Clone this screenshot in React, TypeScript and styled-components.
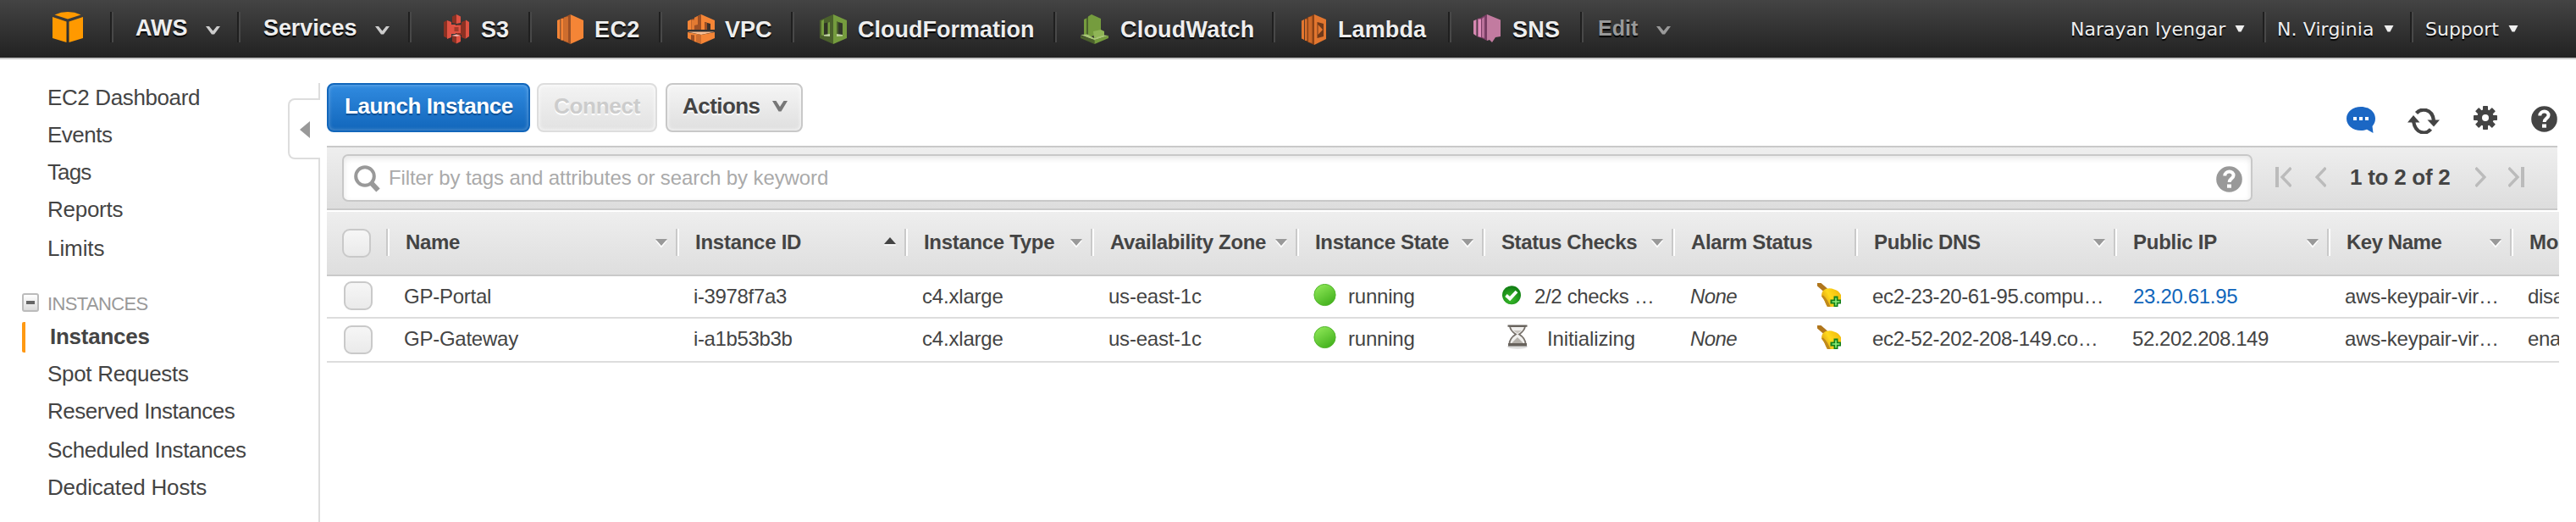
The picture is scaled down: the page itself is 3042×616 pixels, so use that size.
import React from 'react';
import styled, { createGlobalStyle, css } from 'styled-components';

const GlobalStyle = createGlobalStyle`
  * { box-sizing: border-box; }
  body {
    margin: 0;
    background: #fff;
    color: #444;
    font-family: "Liberation Sans", Helvetica, Arial, sans-serif;
  }
  svg { display: block; flex: none; }
`;

/* ---------- page frame ---------- */

const Page = styled.div`
  display: flex;
  flex-direction: column;
  height: 616px;
  overflow: hidden;
`;

const Body = styled.div`
  display: flex;
  flex: 1;
  min-height: 0;
`;

const Text = styled.span<{ $track?: number; $shift?: number }>`
  white-space: nowrap;
  letter-spacing: ${(p) => p.$track ?? 0}px;
  margin-left: ${(p) => p.$shift ?? 0}px;
`;

/* ---------- top navigation ---------- */

const NavBar = styled.header`
  display: flex;
  flex: none;
  height: 70px;
  background: linear-gradient(#444 0, #222 68px);
  background-clip: padding-box;
  border-bottom: 2px solid #c6c6c6;
`;

const LogoLink = styled.a`
  width: 130px;
  padding: 14px 0 0 62px;
`;

const separator = css`
  background-image: linear-gradient(90deg, #1f1f1f 2px, #484848 2px);
  background-size: 4px 36px;
  background-position: 0 14px;
  background-repeat: no-repeat;
`;

const NavMenu = styled.a<{ $width: number; $indent: number; $muted?: boolean }>`
  ${separator}
  display: flex;
  justify-content: space-between;
  width: ${(p) => p.$width}px;
  padding-left: ${(p) => p.$indent}px;
  font-size: ${(p) => (p.$muted ? 25 : 27)}px;
  font-weight: bold;
  line-height: 66px;
  color: ${(p) => (p.$muted ? '#999' : '#eee')};
  text-shadow: 0 2px 1px #000;
`;

const MenuChevron = styled.svg<{ $right: number }>`
  margin: 31px ${(p) => p.$right}px 0 0;
`;

const ServiceLink = styled.a<{ $width: number; $indent: number }>`
  ${separator}
  display: flex;
  width: ${(p) => p.$width}px;
  padding-left: ${(p) => p.$indent}px;
  font-size: 27px;
  font-weight: bold;
  line-height: 70px;
  color: #eee;
  text-shadow: 0 2px 1px #000;
`;

const ServiceIcon = styled.span<{ $gap: number }>`
  padding-top: 17px;
  margin-right: ${(p) => p.$gap}px;
`;

const NavSpacer = styled.div`
  flex: 1;
`;

const AccountMenu = styled.a<{ $width: number; $indent: number; $first?: boolean }>`
  ${(p) => !p.$first && separator}
  display: flex;
  width: ${(p) => p.$width}px;
  padding-left: ${(p) => p.$indent}px;
  font-family: "DejaVu Sans", Verdana, sans-serif;
  font-size: 22px;
  line-height: 69px;
  color: #eee;
  text-shadow: 0 2px 1px #000;
`;

const AccountCaret = styled.svg`
  margin: 30px 0 0 11px;
`;

/* ---------- sidebar ---------- */

const Sidebar = styled.nav`
  width: 340px;
  flex: none;
  padding-top: 23px;
`;

const SideLink = styled.a<{ $active?: boolean; $extra?: boolean }>`
  display: flex;
  align-items: center;
  height: 44px;
  margin-top: ${(p) => (p.$extra ? 2 : 0)}px;
  padding-left: ${(p) => (p.$active ? 26 : 56)}px;
  font-size: 26px;
  line-height: 44px;
  font-weight: ${(p) => (p.$active ? 'bold' : 'normal')};
`;

const ActiveMark = styled.i`
  width: 4px;
  height: 36px;
  margin: 2px 29px 0 0;
  background: #ff9913;
  border-radius: 2px 0 0 2px;
`;

const SideGroup = styled.div`
  display: flex;
  height: 34px;
  margin-top: 26px;
  padding-left: 26px;
  font-size: 22px;
  line-height: 35px;
  color: #999;
`;

const CollapseBox = styled.span`
  display: flex;
  align-items: center;
  justify-content: center;
  width: 20px;
  height: 22px;
  margin: 5px 10px 0 0;
  border: 2px solid #bbb;
  border-radius: 3px;
  background: linear-gradient(#fff, #dcdcdc);
  &::after {
    content: '';
    width: 10px;
    height: 4px;
    background: #666;
  }
`;

const Divider = styled.div`
  display: flex;
  flex-direction: column;
  align-items: flex-end;
  width: 38px;
  flex: none;
  padding-top: 28px;
`;

const DividerLine = styled.div<{ $height?: number }>`
  width: 2px;
  background: #ddd;
  ${(p) => (p.$height ? `height: ${p.$height}px;` : 'flex: 1;')}
`;

const CollapseTab = styled.button`
  display: flex;
  align-items: center;
  width: 38px;
  height: 72px;
  padding: 2px 0 0 12px;
  background: #fff;
  border: 2px solid #ddd;
  border-right: 0;
  border-radius: 8px 0 0 8px;
`;

/* ---------- main panel ---------- */

const Main = styled.main`
  width: 2636px;
  margin-left: 8px;
  padding-top: 28px;
`;

const ActionRow = styled.div`
  display: flex;
  width: 2634px;
  height: 74px;
`;

const buttonLooks = {
  primary: css`
    color: #fff;
    border-color: #1166bb;
    background: linear-gradient(#318be0, #1166bb);
    box-shadow: inset 0 0 5px rgba(255, 255, 255, 0.35);
    text-shadow: 0 2px 1px #0d4f94;
  `,
  disabled: css`
    color: #ccc;
    border-color: #ddd;
    background: linear-gradient(#f3f3f3, #e2e2e2);
    box-shadow: inset 0 0 5px #fff;
    text-shadow: 0 2px 0 #fff;
  `,
  normal: css`
    color: #444;
    border-color: #c8c8c8;
    background: linear-gradient(#f5f5f5, #dfdfdf);
    box-shadow: inset 0 0 5px #fff;
    text-shadow: 0 2px 0 #fff;
  `,
};

const Button = styled.button<{ $look: keyof typeof buttonLooks; $width: number; $gap?: number }>`
  display: flex;
  width: ${(p) => p.$width}px;
  height: 58px;
  margin-right: ${(p) => p.$gap ?? 0}px;
  padding: 0 0 0 18px;
  border: 2px solid;
  border-radius: 8px;
  font: bold 26px/50px "Liberation Sans", Helvetica, Arial, sans-serif;
  ${(p) => buttonLooks[p.$look]}
`;

const ToolIcons = styled.div`
  display: flex;
  align-items: flex-start;
  margin-left: auto;
  padding-top: 27px;
`;

const ToolIcon = styled.span<{ $gap?: number; $drop?: number }>`
  margin-right: ${(p) => p.$gap ?? 0}px;
  padding-top: ${(p) => p.$drop ?? 0}px;
`;

const FilterBar = styled.div`
  display: flex;
  width: 2634px;
  height: 76px;
  padding: 8px 0 0 18px;
  margin-bottom: 2px;
  border-top: 2px solid #c9c9c9;
  border-bottom: 2px solid #c9c9c9;
  background: linear-gradient(#eee, #ddd);
`;

const SearchBox = styled.div`
  display: flex;
  width: 2256px;
  height: 56px;
  padding: 0 10px 0 12px;
  border: 2px solid #c8c8c8;
  border-radius: 7px;
  background: #fff;
  box-shadow: inset 0 3px 7px rgba(0, 0, 0, 0.1);
  font-size: 24px;
  line-height: 51px;
  color: #aaa;
`;

const SearchGlyph = styled.span`
  margin: 11px 8px 0 0;
`;

const HelpSlot = styled.span`
  margin: 12px 0 0 auto;
`;

const Pager = styled.div`
  display: flex;
  padding-left: 27px;
  font-size: 26px;
  font-weight: bold;
  line-height: 54px;
`;

const PagerButton = styled.span<{ $gap: number }>`
  margin: 15px ${(p) => p.$gap}px 0 0;
`;

const PagerCount = styled.span`
  width: 148px;
`;

/* ---------- table ---------- */

const columns = '70px 342px 270px 220px 242px 220px 224px 216px 306px 252px 216px 58px';

const HeadRow = styled.div`
  display: grid;
  grid-template-columns: ${columns};
  height: 76px;
  border-bottom: 2px solid #c9c9c9;
  background: linear-gradient(#eee, #dedede);
`;

const HeadCell = styled.div`
  display: flex;
  min-width: 0;
  overflow: hidden;
  padding-left: 23px;
  font-size: 24px;
  font-weight: bold;
  line-height: 71px;
  background: linear-gradient(90deg, #c9c9c9 2px, #fff 2px) 0 20px / 4px 32px no-repeat;
`;

const SortMark = styled.svg<{ $up?: boolean }>`
  margin: ${(p) => (p.$up ? 30 : 32)}px 10px 0 auto;
`;

const DataRow = styled.div<{ $height: number }>`
  display: grid;
  grid-template-columns: ${columns};
  height: ${(p) => p.$height}px;
  border-bottom: 2px solid #ddd;
`;

const Cell = styled.div<{ $italic?: boolean }>`
  display: flex;
  min-width: 0;
  overflow: hidden;
  padding-left: 21px;
  font-size: 24px;
  line-height: 47px;
  font-style: ${(p) => (p.$italic ? 'italic' : 'normal')};
`;

const CellIcon = styled.span<{ $top: number; $left: number; $right: number }>`
  margin: ${(p) => `${p.$top}px ${p.$right}px 0 ${p.$left}px`};
`;

const BellSlot = styled.span`
  margin: 8px 16px 0 auto;
`;

const IpLink = styled.a`
  color: #1166bb;
  margin-left: 2px;
`;

const CheckBox = styled.span<{ $top: number; $left: number }>`
  width: 34px;
  height: 34px;
  margin: ${(p) => p.$top}px 0 0 ${(p) => p.$left}px;
  border: 2px solid #c9c9c9;
  border-radius: 9px;
  background: linear-gradient(#f6f6f6, #eaeaea);
`;

/* ---------- drawings ---------- */

const Logo = () => (
  <svg width="36" height="36" viewBox="0 0 36 36" fill="#ff9900">
    <path d="M18 0 26 .8 33.5 3.6 18 8.6 2.5 3.6 10 .8Z" />
    <path d="M0 6 16.5 11.5V36L0 31Z" />
    <path d="M36 6 19.5 11.5V36L36 31Z" />
  </svg>
);

const ChevronShape = ({ color, right }: { color: string; right: number }) => (
  <MenuChevron $right={right} width="17" height="10" viewBox="0 0 17 10">
    <path d="M0 0H4L8.500 5.500 13 0H17L10 9.500H7Z" fill={color} />
  </MenuChevron>
);

const Caret = () => (
  <AccountCaret width="12" height="8" viewBox="0 0 12 8">
    <path d="M.5 0H11.5L7.5 7.5H4.5Z" fill="#eee" />
  </AccountCaret>
);

const S3Icon = () => (
  <svg width="30" height="35" viewBox="0 0 30 35">
    <path d="M0 9 4 7V28L0 26Z" fill="#8c3123" />
    <path d="M4 7 9 9V12H14V23H9V27L4 29Z" fill="#e05243" />
    <path d="M26 7 21 9V12H15V24H21V27L26 29Z" fill="#8c3123" />
    <path d="M26 6.5 30 9V26L26 28.5Z" fill="#e05243" />
    <path d="M15 0 10 2.5V10L15 11Z" fill="#8c3123" />
    <path d="M15 0 20 2.5V10L15 11Z" fill="#e05243" />
    <path d="M10 13H20V22H10Z" fill="#e05243" />
    <path d="M12.5 15H17.5V20H12.5Z" fill="#a13a2b" />
    <path d="M10 25 15 24V34.5L10 32Z" fill="#8c3123" />
    <path d="M20 25 15 24V34.5L20 32Z" fill="#e05243" />
    <path d="M9 25 15 23.5 20 25 15 26Z" fill="#f2b0a9" />
  </svg>
);

const Ec2Icon = () => (
  <svg width="31" height="35" viewBox="0 0 31 35">
    <path d="M15.5 0 31 7V28L15.5 35Z" fill="#f58536" />
    <path d="M15.5 0 8 3.5V31.5L15.5 35Z" fill="#9d5025" />
    <path d="M8 3.5 13 2.5V33L8 31.5Z" fill="#f58536" opacity=".55" />
    <path d="M4 5 8 3.5V31.5L4 30Z" fill="#9d5025" />
    <path d="M4.5 5H7.5V30.5H4.5Z" fill="#f58536" />
    <path d="M0 7 3.5 5.5V29.5L0 28Z" fill="#f58536" />
  </svg>
);

const VpcIcon = () => (
  <svg width="32" height="35" viewBox="0 0 32 35">
    <path d="M0 8 4 6V18H0ZM8 4 16 0 32 7V18H8Z" fill="#f58536" />
    <path d="M4 6 8 4.5V18H4ZM8 4 16 0V18H8Z" fill="#9d5025" />
    <path d="M4.5 6.5H8V18H4.5ZM8 4 12 2V12L8 13Z" fill="#f58536" opacity=".8" />
    <path d="M20 9 27 11V18H20Z" fill="#3a302a" />
    <path d="M20 9 23 10V18H20Z" fill="#9d5025" />
    <path d="M0 20.5H32L16 24Z" fill="#fbbf93" />
    <path d="M0 21 16 24V35L8 32V29L4 30 0 28Z" fill="#f58536" />
    <path d="M4 24 8 24.5V32L4 30Z" fill="#9d5025" />
    <path d="M32 21 16 24V35L32 28Z" fill="#f58536" />
    <path d="M16 24V35L10 32.5V24Z" fill="#9d5025" opacity=".45" />
  </svg>
);

const CloudFormationIcon = () => (
  <svg width="32" height="35" viewBox="0 0 32 35">
    <path d="M16 0 0 7V28L16 35Z" fill="#4b612c" />
    <path d="M16 0 32 7V28L16 35Z" fill="#759c3e" />
    <path d="M2 7.5 5 6V25L2 24.5Z" fill="#759c3e" />
    <path d="M5 10.5 12 9V25H5Z" fill="#2f3325" />
    <path d="M9.500 9.500 12 9V25H9.500Z" fill="#759c3e" />
    <path d="M20 8.5 27 10.5V25H20Z" fill="#32372a" />
    <path d="M20 8.5 22 9V24H20Z" fill="#4b612c" />
    <path d="M5 24 12 23V26L5 25.5ZM20 23 27 24V25.5L20 26Z" fill="#c3d6a4" />
  </svg>
);

const CloudWatchIcon = () => (
  <svg width="33" height="35" viewBox="0 0 33 35">
    <path d="M4 6 7 4.5V24H4Z" fill="#759c3e" />
    <path d="M7 4.5 13 0V26L7 24Z" fill="#4b612c" />
    <path d="M9 2.5 13 0 24 5V22L13 26 9 25Z" fill="#759c3e" />
    <path d="M15 20 24 18 28 20V26L16 28Z" fill="#8fb556" />
    <path d="M0 24 8 23.500 16 28 28 24.500 33 25 16.5 30.500Z" fill="#a9c777" />
    <path d="M0 25 16.5 30V35L0 28Z" fill="#4b612c" />
    <path d="M33 25 16.5 30V35L33 28Z" fill="#759c3e" />
  </svg>
);

const LambdaIcon = () => (
  <svg width="29" height="36" viewBox="0 0 29 36">
    <path d="M15 0 29 6V29L15 36Z" fill="#e2762f" />
    <path d="M15 0 7 3.5V32.5L15 36Z" fill="#8a4216" />
    <path d="M8 3.5 12.5 2V34L8 32.5Z" fill="#e2762f" opacity=".75" />
    <path d="M3.5 5.5 7 4V32L3.5 30.5Z" fill="#8a4216" />
    <path d="M4 5.5H6.5V31H4Z" fill="#e2762f" opacity=".9" />
    <path d="M0 7.5 3 6V30L0 28.5Z" fill="#e2762f" />
    <path d="M18.5 9 26 11V26L18.5 28Z" fill="#70391a" />
    <path d="M19.5 12 25 18 19.5 24Z" fill="#e2762f" />
  </svg>
);

const SnsIcon = () => (
  <svg width="32" height="33" viewBox="0 0 32 33">
    <path d="M16 0 32 6.5V26L26 27 22 33 19 30 16 31Z" fill="#c27ba0" />
    <path d="M16 0 10 3V28L16 31Z" fill="#7a3e65" />
    <path d="M10 5 13 3V28L10 27Z" fill="#d587b0" opacity=".7" />
    <path d="M4.5 5 10 3.5V28L4.5 26.5Z" fill="#7a3e65" />
    <path d="M5.5 5.5H9V27L5.5 26Z" fill="#e08dbb" />
    <path d="M0 7.5 3.5 6V25.5L0 23Z" fill="#d587b0" />
  </svg>
);

const TabArrow = () => (
  <svg width="12" height="20" viewBox="0 0 12 20">
    <path d="M12 0V20L0 10Z" fill="#999" />
  </svg>
);

const ActionChevron = styled.svg`
  margin: 19px 0 0 14px;
`;

const ChatIcon = () => (
  <svg width="34" height="31" viewBox="0 0 34 31">
    <path d="M17 0C26.5 0 34 6 34 14c0 4-1.500 6.500-3.500 9L31.500 31 24 26.700C22 27.500 19.500 28 17 28 7.500 28 0 22 0 14S7.500 0 17 0Z" fill="#1b67c4" />
    <path d="M8 12h4v4H8zM15 12h4v4h-4zM22 12h4v4h-4z" fill="#fff" />
  </svg>
);

const RefreshIcon = () => (
  <svg width="38" height="30" viewBox="0 0 38 30">
    <path d="M10.5 5.500C16-.5 29-.5 31 14" fill="none" stroke="#444" strokeWidth="4.200" />
    <path d="M27.500 24.500C22 31 9.500 30.500 7 15" fill="none" stroke="#444" strokeWidth="4.200" />
    <path d="M23.500 13.500H38L31 21.500Z" fill="#444" />
    <path d="M0 16.500H14.500L7 8Z" fill="#444" />
  </svg>
);

const GearIcon = () => (
  <svg width="28" height="28" viewBox="0 0 28 28">
    <g fill="#444">
      <circle cx="14" cy="14" r="10" />
      {[0, 45, 90, 135].map((angle) => (
        <rect key={angle} x="11" y="0" width="6" height="28" rx=".8" transform={`rotate(${angle} 14 14)`} />
      ))}
    </g>
    <circle cx="14" cy="14" r="4" fill="#fff" />
  </svg>
);

const HelpIcon = ({ color }: { color: string }) => (
  <svg width="31" height="31" viewBox="0 0 31 31">
    <circle cx="15.5" cy="15.5" r="15.3" fill={color} />
    <path d="M10.3 11.5C10.5 4.8 21 5 20.5 11.3 20.2 14.8 15.8 14.6 15.6 19" fill="none" stroke="#fff" strokeWidth="4" />
    <rect x="13" y="21.5" width="5" height="4.2" fill="#fff" />
  </svg>
);

const Magnifier = () => (
  <svg width="31" height="32" viewBox="0 0 31 32">
    <circle cx="13" cy="13" r="10.8" fill="none" stroke="#999" strokeWidth="4" />
    <path d="M20 20.5 28.5 29.5" stroke="#999" strokeWidth="6" />
  </svg>
);

const PageStep = ({ flip, edge }: { flip?: boolean; edge?: boolean }) => {
  const width = edge ? 19 : 13;
  return (
    <svg width={width} height="24" viewBox={`0 0 ${width} 24`}>
      <g transform={flip ? `translate(${width} 0) scale(-1 1)` : undefined} fill="none" stroke="#bbb">
        {edge && <path d="M2 0V24" strokeWidth="4" />}
        <path d={`M${width - 0.5} 1 ${width - 11} 12 ${width - 0.5} 23`} strokeWidth="3.4" />
      </g>
    </svg>
  );
};

const Sort = ({ up }: { up?: boolean }) => (
  <SortMark $up={up} width="14" height="11" viewBox="0 0 14 11">
    {up ? (
      <>
        <path d="M0 8.5H14V10H0Z" fill="#fff" opacity=".7" />
        <path d="M7 0 14 8H0Z" fill="#444" />
      </>
    ) : (
      <>
        <path d="M0 2H14L7 10.5Z" fill="#fff" />
        <path d="M0 0H14L7 8Z" fill="#999" />
      </>
    )}
  </SortMark>
);

const RunningDot = () => (
  <svg width="27" height="27" viewBox="0 0 27 27">
    <defs>
      <linearGradient id="dot" x1=".2" y1="0" x2=".8" y2="1">
        <stop offset="0" stopColor="#8fe858" />
        <stop offset="1" stopColor="#3fae1a" />
      </linearGradient>
    </defs>
    <circle cx="13.5" cy="13" r="12.6" fill="url(#dot)" stroke="#52b52c" strokeWidth="1" />
  </svg>
);

const CheckIcon = () => (
  <svg width="24" height="24" viewBox="0 0 24 24">
    <defs>
      <radialGradient id="ok" cx=".45" cy=".7" r=".7">
        <stop offset="0" stopColor="#3cc02c" />
        <stop offset="1" stopColor="#0e7a12" />
      </radialGradient>
    </defs>
    <circle cx="12" cy="11.2" r="11" fill="url(#ok)" />
    <path d="M5.5 11.5 10 15.5 18 7" fill="none" stroke="#fff" strokeWidth="3.8" />
  </svg>
);

const Hourglass = () => (
  <svg width="24" height="29" viewBox="0 0 24 29">
    <ellipse cx="12" cy="26" rx="12" ry="2.8" fill="#ddd" />
    <path d="M3 2H21C20.500 7 17 9.500 14 11.500 18 14 21.500 17 21.500 23H2.500C2.500 17 6 14 10 11.500 7 9.500 3.500 7 3 2Z" fill="#f0efed" stroke="#76706a" strokeWidth="1.8" />
    <path d="M7 7H17L12 10.500Z" fill="#c9c5c0" />
    <path d="M5 22 12 15 19 22Z" fill="#b5b1ab" />
    <path d="M.5 .5H23.500V2.800H.5ZM1 22H23V25.500H1Z" fill="#67625c" />
  </svg>
);

const BellIcon = () => (
  <svg width="28" height="28" viewBox="0 0 28 28">
    <defs>
      <linearGradient id="bell" x1="0" y1=".7" x2="1" y2=".2">
        <stop offset="0" stopColor="#d99a12" />
        <stop offset=".45" stopColor="#ffd91c" />
        <stop offset="1" stopColor="#f0b90a" />
      </linearGradient>
    </defs>
    <path d="M0 0H4.500L12 6.500 8 10.500 0 3.500Z" fill="#b0761c" />
    <path d="M7 9C11 5.500 16 6 20 7.500 24 8.500 26 10.500 28 14V20L20 28H12C10 25 9.500 21 5 15.500 5 13 5.500 10.500 7 9Z" fill="url(#bell)" />
    <path d="M12 28C10 25 9.500 21 5 15.500L7 14.500C11 18 13 22 15.500 28Z" fill="#c08a1c" />
    <path d="M19.500 15.500H24.500V19.500H28V24.500H24.500V28H19.500V24.500H15.500V19.500H19.500Z" fill="#14801a" />
    <path d="M21.200 17.500H22.800V21.200H26.500V22.800H22.800V26.500H21.200V22.800H17.500V21.200H21.200Z" fill="#8ff07a" />
  </svg>
);

/* ---------- data ---------- */

const services = [
  { name: 'S3', icon: <S3Icon />, width: 142, indent: 42, gap: 14, track: 0 },
  { name: 'EC2', icon: <Ec2Icon />, width: 154, indent: 34, gap: 13, track: 0.4 },
  { name: 'VPC', icon: <VpcIcon />, width: 156, indent: 34, gap: 12, track: 0 },
  { name: 'CloudFormation', icon: <CloudFormationIcon />, width: 310, indent: 34, gap: 13, track: 0 },
  { name: 'CloudWatch', icon: <CloudWatchIcon />, width: 258, indent: 32, gap: 14, track: 0.2 },
  { name: 'Lambda', icon: <LambdaIcon />, width: 208, indent: 35, gap: 14, track: 0.1 },
  { name: 'SNS', icon: <SnsIcon />, width: 156, indent: 30, gap: 14, track: 0.3 },
];

const sideTop = [
  { name: 'EC2 Dashboard', track: -0.38 },
  { name: 'Events', track: -0.5 },
  { name: 'Tags', track: -0.9 },
  { name: 'Reports', track: -0.26 },
  { name: 'Limits', track: -0.08, extra: true },
];

const sideInstances = [
  { name: 'Spot Requests', track: -0.3 },
  { name: 'Reserved Instances', track: -0.48 },
  { name: 'Scheduled Instances', track: -0.35, extra: true },
  { name: 'Dedicated Hosts', track: -0.18 },
];

const headings: { name: string; sort?: 'up' | 'down'; track: number; shift?: number }[] = [
  { name: 'Name', sort: 'down', track: -0.34 },
  { name: 'Instance ID', sort: 'up', track: -0.26 },
  { name: 'Instance Type', sort: 'down', track: -0.31 },
  { name: 'Availability Zone', sort: 'down', track: -0.34 },
  { name: 'Instance State', sort: 'down', track: -0.34 },
  { name: 'Status Checks', sort: 'down', track: -0.4 },
  { name: 'Alarm Status', track: -0.4 },
  { name: 'Public DNS', sort: 'down', track: -0.37 },
  { name: 'Public IP', sort: 'down', track: -0.27 },
  { name: 'Key Name', sort: 'down', track: -0.46 },
  { name: 'Mo', track: -0.3 },
];

const instances = [
  {
    name: 'GP-Portal',
    id: 'i-3978f7a3',
    ready: true,
    checks: '2/2 checks …',
    dns: 'ec2-23-20-61-95.compu…',
    ip: '23.20.61.95',
    monitoring: 'disa',
    height: 50,
    boxTop: 6,
  },
  {
    name: 'GP-Gateway',
    id: 'i-a1b53b3b',
    ready: false,
    checks: 'Initializing',
    dns: 'ec2-52-202-208-149.co…',
    ip: '52.202.208.149',
    monitoring: 'ena',
    height: 52,
    boxTop: 8,
  },
];

/* ---------- screen ---------- */

export default function App() {
  return (
    <Page>
      <GlobalStyle />
      <NavBar>
        <LogoLink>
          <Logo />
        </LogoLink>
        <NavMenu $width={150} $indent={30}>
          <Text>AWS</Text>
          <ChevronShape color="#ccc" right={20} />
        </NavMenu>
        <NavMenu $width={202} $indent={31}>
          <Text $track={-0.1}>Services</Text>
          <ChevronShape color="#ccc" right={22} />
        </NavMenu>
        {services.map((service) => (
          <ServiceLink key={service.name} $width={service.width} $indent={service.indent}>
            <ServiceIcon $gap={service.gap}>{service.icon}</ServiceIcon>
            <Text $track={service.track}>{service.name}</Text>
          </ServiceLink>
        ))}
        <NavMenu $width={120} $indent={21} $muted>
          <Text>Edit</Text>
          <ChevronShape color="#999" right={13} />
        </NavMenu>
        <NavSpacer />
        <AccountMenu $width={228} $indent={1} $first>
          <Text>Narayan Iyengar</Text>
          <Caret />
        </AccountMenu>
        <AccountMenu $width={174} $indent={17}>
          <Text $track={0.1}>N. Virginia</Text>
          <Caret />
        </AccountMenu>
        <AccountMenu $width={196} $indent={18}>
          <Text>Support</Text>
          <Caret />
        </AccountMenu>
      </NavBar>

      <Body>
        <Sidebar>
          {sideTop.map((item) => (
            <SideLink key={item.name} $extra={item.extra}>
              <Text $track={item.track}>{item.name}</Text>
            </SideLink>
          ))}
          <SideGroup>
            <CollapseBox />
            <Text $track={-0.64}>INSTANCES</Text>
          </SideGroup>
          <SideLink $active>
            <ActiveMark />
            <Text $track={-0.26}>Instances</Text>
          </SideLink>
          {sideInstances.map((item) => (
            <SideLink key={item.name} $extra={item.extra}>
              <Text $track={item.track}>{item.name}</Text>
            </SideLink>
          ))}
        </Sidebar>

        <Divider>
          <DividerLine $height={18} />
          <CollapseTab>
            <TabArrow />
          </CollapseTab>
          <DividerLine />
        </Divider>

        <Main>
          <ActionRow>
            <Button $look="primary" $width={240} $gap={8}>
              <Text $track={-0.42} $shift={1}>Launch Instance</Text>
            </Button>
            <Button $look="disabled" $width={142} $gap={10}>
              <Text $track={-0.27}>Connect</Text>
            </Button>
            <Button $look="normal" $width={162}>
              <Text $track={-0.55}>Actions</Text>
              <ActionChevron width="18" height="13" viewBox="0 0 18 13">
                <path d="M0 0H4.5L9 7 13.5 0H18L10.500 12.500H7.500Z" fill="#777" />
              </ActionChevron>
            </Button>
            <ToolIcons>
              <ToolIcon $gap={38} $drop={1}><ChatIcon /></ToolIcon>
              <ToolIcon $gap={40} $drop={3}><RefreshIcon /></ToolIcon>
              <ToolIcon $gap={40}><GearIcon /></ToolIcon>
              <ToolIcon><HelpIcon color="#444" /></ToolIcon>
            </ToolIcons>
          </ActionRow>

          <FilterBar>
            <SearchBox>
              <SearchGlyph><Magnifier /></SearchGlyph>
              <Text $track={-0.1} $shift={2}>Filter by tags and attributes or search by keyword</Text>
              <HelpSlot><HelpIcon color="#999" /></HelpSlot>
            </SearchBox>
            <Pager>
              <PagerButton $gap={28}><PageStep edge /></PagerButton>
              <PagerButton $gap={28}><PageStep /></PagerButton>
              <PagerCount><Text $track={-0.26}>1 to 2 of 2</Text></PagerCount>
              <PagerButton $gap={26}><PageStep flip /></PagerButton>
              <PagerButton $gap={0}><PageStep flip edge /></PagerButton>
            </Pager>
          </FilterBar>

          <HeadRow>
            <CheckBox $top={20} $left={18} />
            {headings.map((heading) => (
              <HeadCell key={heading.name}>
                <Text $track={heading.track} $shift={heading.shift}>{heading.name}</Text>
                {heading.sort && <Sort up={heading.sort === 'up'} />}
              </HeadCell>
            ))}
          </HeadRow>

          {instances.map((row) => (
            <DataRow key={row.id} $height={row.height}>
              <CheckBox $top={row.boxTop} $left={20} />
              <Cell><Text $track={-0.25}>{row.name}</Text></Cell>
              <Cell><Text $track={-0.35}>{row.id}</Text></Cell>
              <Cell><Text $track={-0.19}>c4.xlarge</Text></Cell>
              <Cell><Text $track={-0.23}>us-east-1c</Text></Cell>
              <Cell>
                <CellIcon $top={9} $left={0} $right={14}><RunningDot /></CellIcon>
                <Text $track={-0.2}>running</Text>
              </Cell>
              <Cell>
                {row.ready ? (
                  <CellIcon $top={11} $left={2} $right={15}><CheckIcon /></CellIcon>
                ) : (
                  <CellIcon $top={7} $left={9} $right={23}><Hourglass /></CellIcon>
                )}
                <Text $track={row.ready ? -0.34 : -0.12}>{row.checks}</Text>
              </Cell>
              <Cell $italic>
                <Text $track={-0.6} $shift={1}>None</Text>
                <BellSlot><BellIcon /></BellSlot>
              </Cell>
              <Cell><Text $track={-0.32}>{row.dns}</Text></Cell>
              <Cell>
                {row.ready ? (
                  <IpLink><Text $track={-0.32}>{row.ip}</Text></IpLink>
                ) : (
                  <Text $track={-0.42} $shift={1}>{row.ip}</Text>
                )}
              </Cell>
              <Cell><Text $track={-0.22}>aws-keypair-vir…</Text></Cell>
              <Cell><Text $track={-0.3}>{row.monitoring}</Text></Cell>
            </DataRow>
          ))}
        </Main>
      </Body>
    </Page>
  );
}
